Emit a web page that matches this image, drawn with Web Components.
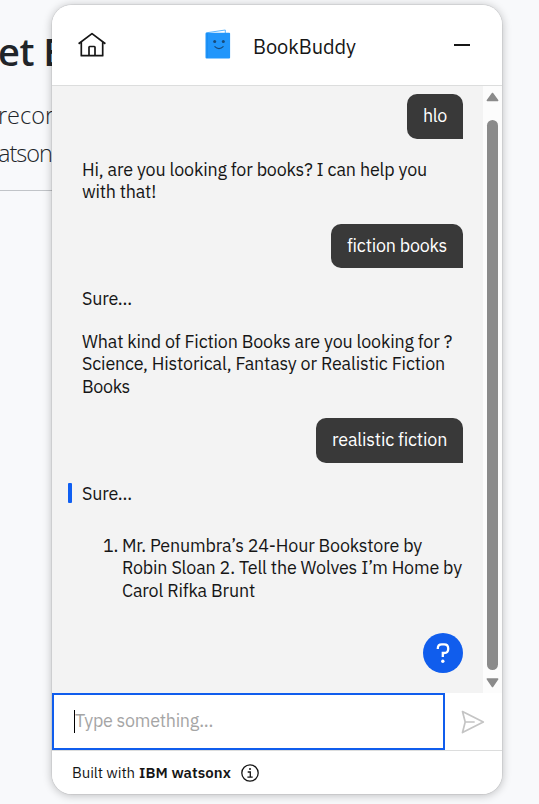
<!DOCTYPE html>
<html lang="en">
<head>
<meta charset="utf-8">
<title>BookBuddy</title>
<style>
html,body{margin:0;height:100%;overflow:hidden;background:#f8f9fb;font-family:"IBM Plex Sans",Roboto,"Noto Sans",sans-serif;color:#161616}
</style>
</head>
<body>
<book-page></book-page>
<script>
const define = (name, html, setup) => {
  const t = document.createElement('template');
  t.innerHTML = html;
  customElements.define(name, class extends HTMLElement {
    connectedCallback() {
      if (this.shadowRoot) return;
      this.attachShadow({mode: 'open'}).append(t.content.cloneNode(true));
      if (setup) setup(this);
    }
  });
};

/* One line of text, tracked so that it spans the width given in "w". */
define('text-line', `<style>:host{display:block;white-space:nowrap}span{display:inline-block}</style><span><slot></slot></span>`, el => {
  const s = el.shadowRoot.querySelector('span');
  const w = parseFloat(el.getAttribute('w'));
  el.style.width = w + 'px';
  const n = el.textContent.length;
  s.style.letterSpacing = (w - s.getBoundingClientRect().width) / n + 'px';
});

define('page-backdrop', `<style>
:host{display:block;width:52px;height:804px;overflow:hidden;font-family:"Segoe UI","Open Sans",sans-serif;color:#212529}
h1{margin:0;padding-top:26px;font-size:38px;line-height:50px;font-weight:600}
p{margin:0;font-size:23.5px;font-weight:300;line-height:38px;padding-top:20px}
hr{margin:18px 0 0;border:0;border-top:1px solid #c1c4c8}
text-line{margin-left:-2px}
</style>
<h1><text-line w="66">et E</text-line></h1>
<p><text-line w="56">recor</text-line><text-line w="54">atson</text-line></p><hr>`);

define('chat-header', `<style>
:host{display:flex;align-items:center;height:80px;flex:none;background:#fff;border-bottom:1px solid #dcdddd}
.home{margin-left:25px;margin-top:-1px}
.book{margin-left:98px;margin-top:-2px}
text-line{margin-left:22px;font-size:20px;line-height:26px;margin-top:3px}
i{width:16px;height:2px;background:#161616;margin-left:98px}
svg{display:block;flex:none}
</style>
<svg class="home" width="30" height="30" viewBox="0 0 30 30" fill="none" stroke="#161616" stroke-width="1.7" stroke-linejoin="round"><path d="M1.6 13.7 15 3.6l13.4 10.1M4.3 12v13.7h21.4V12M12 25.7v-8.5q0-.7.7-.7h4.6q.7 0 .7.7v8.5"/></svg>
<svg class="book" width="26" height="30" viewBox="0 0 26 30"><path d="M1.3 3.8 20.3 1v4H2z" fill="#fff" stroke="#4aaeff" stroke-width=".9"/><rect x=".5" y="3.8" width="24.6" height="25.7" rx="1" fill="#2196fb"/><path d="M2.3 4v25" stroke="#168aed" stroke-width=".7"/><circle cx="9.7" cy="12.5" r="1.5" fill="#174a79"/><circle cx="18.3" cy="12.5" r="1.5" fill="#174a79"/><path d="M9.5 17.3q4.5 4.6 9 0" fill="none" stroke="#174a79" stroke-width="1.2"/></svg>
<text-line w="103">BookBuddy</text-line><i></i>`);

define('user-message', `<style>
:host{display:block;align-self:flex-end;box-sizing:border-box;height:44.5px;padding:11px 16px;background:#393939;color:#fff;border-radius:10px 10px 0 10px;line-height:22.5px}
</style><slot></slot>`);

define('bot-message', `<style>
:host{display:block;position:relative}
:host([latest])::before{content:"";position:absolute;left:-14px;top:0;width:4px;height:20px;border-radius:1px;background:#0f5ff2}
</style><slot></slot>`);

define('book-list', `<style>
:host{display:grid;grid-template-columns:15px auto;column-gap:4px;margin:9.5px 0 0 21px}
</style><text-line w="15">1.</text-line><div><slot></slot></div>`);

define('help-button', `<style>
:host{position:absolute;left:371px;top:547px;width:40px;height:40px;border-radius:50%;background:#105ded}
svg{display:block}
</style><svg width="40" height="40" fill="none" stroke="#fff" stroke-width="2.3"><path d="M14.8 16v-.6q0-4 4-4h2.4q4 0 4 4v.6q0 4-4 4h-1.4v4"/><circle cx="19.8" cy="28.2" r="1.7" fill="#fff" stroke="none"/></svg>`);

define('scroll-bar', `<style>
:host{display:flex;flex-direction:column;align-items:center;width:19px;flex:none;background:#fcfcfc}
i{width:11px;height:550px;border-radius:6px;background:#8b8b8b}
svg{display:block}.up{margin:6px 0 18px}.down{margin-top:7px}
</style>
<svg class="up" width="13" height="10"><path d="M6.5 1.5 11.6 8.5H1.4z" fill="#8b8b8b" stroke="#8b8b8b" stroke-width="1.6" stroke-linejoin="round"/></svg><i></i><svg class="down" width="13" height="12"><path d="M1.4 2h10.2L6.5 9.5z" fill="#8b8b8b" stroke="#8b8b8b" stroke-width="1.6" stroke-linejoin="round"/></svg>`);

define('message-log', `<style>
:host{display:flex;position:relative;height:607px;flex:none;background:#f3f3f3}
.log{display:flex;flex-direction:column;gap:20px;flex:1;padding:8px 20px 0 30px;font-size:17.9px;line-height:22.5px}
</style>
<div class="log">
<user-message><text-line w="24">hlo</text-line></user-message>
<bot-message><text-line w="345">Hi, are you looking for books? I can help you</text-line><text-line w="74">with that!</text-line></bot-message>
<user-message><text-line w="100">fiction books</text-line></user-message>
<bot-message><text-line w="50">Sure...</text-line></bot-message>
<bot-message><text-line w="370">What kind of Fiction Books are you looking for ?</text-line><text-line w="363">Science, Historical, Fantasy or Realistic Fiction</text-line><text-line w="48">Books</text-line></bot-message>
<user-message><text-line w="115">realistic fiction</text-line></user-message>
<bot-message latest><text-line w="50">Sure...</text-line></bot-message>
<book-list><text-line w="300">Mr. Penumbra’s 24-Hour Bookstore by</text-line><text-line w="340">Robin Sloan 2. Tell the Wolves I’m Home by</text-line><text-line w="133">Carol Rifka Brunt</text-line></book-list>
</div>
<scroll-bar></scroll-bar>
<help-button></help-button>`);

define('message-input', `<style>
:host{display:flex;height:57px;flex:none;background:#fff}
.field{box-sizing:border-box;width:393px;border:2px solid #105ded;display:flex;align-items:center;padding-left:20px;font-size:17.9px;color:#a5a5a5}
.field i{width:1px;height:23px;background:#000}
.field text-line{padding-bottom:2px}
svg{display:block;margin:16px 0 0 15px}
</style>
<div class="field"><i></i><text-line w="138">Type something...</text-line></div>
<svg width="26" height="26" fill="none" stroke="#c4c4c4" stroke-width="1.7" stroke-linejoin="round"><path d="M2.5 2.5 23.3 13 2.5 23.5 5.2 13zM5.2 13h9.5"/></svg>`);

define('chat-footer', `<style>
:host{display:flex;flex:1;box-sizing:border-box;align-items:center;border-top:1px solid #dcdddd;padding-left:20px;font-size:15px;background:#fff}
b{margin:0 9px 0 4px;font-weight:600}svg{display:block}
</style>
<text-line w="63">Built with</text-line><b><text-line w="92">IBM watsonx</text-line></b>
<svg width="20" height="20" fill="none" stroke="#161616" stroke-width="1.3"><circle cx="10" cy="10" r="8.2"/><path d="M7.7 9h2.6v5M7.4 14.1h5.3"/><circle cx="10" cy="6.1" r="1" fill="#161616" stroke="none"/></svg>`);

define('chat-widget', `<style>
:host{position:absolute;left:52px;top:5px;width:450px;height:789px;display:flex;flex-direction:column;border-radius:20px;overflow:hidden;background:#fff;box-shadow:0 0 0 1px rgba(0,0,0,.06),0 1px 8px 1px rgba(0,0,0,.22)}
</style><chat-header></chat-header><message-log></message-log><message-input></message-input><chat-footer></chat-footer>`);

define('book-page', `<style>:host{display:block;position:relative;width:539px;height:804px}</style><page-backdrop></page-backdrop><chat-widget></chat-widget>`);
</script>
</body>
</html>
